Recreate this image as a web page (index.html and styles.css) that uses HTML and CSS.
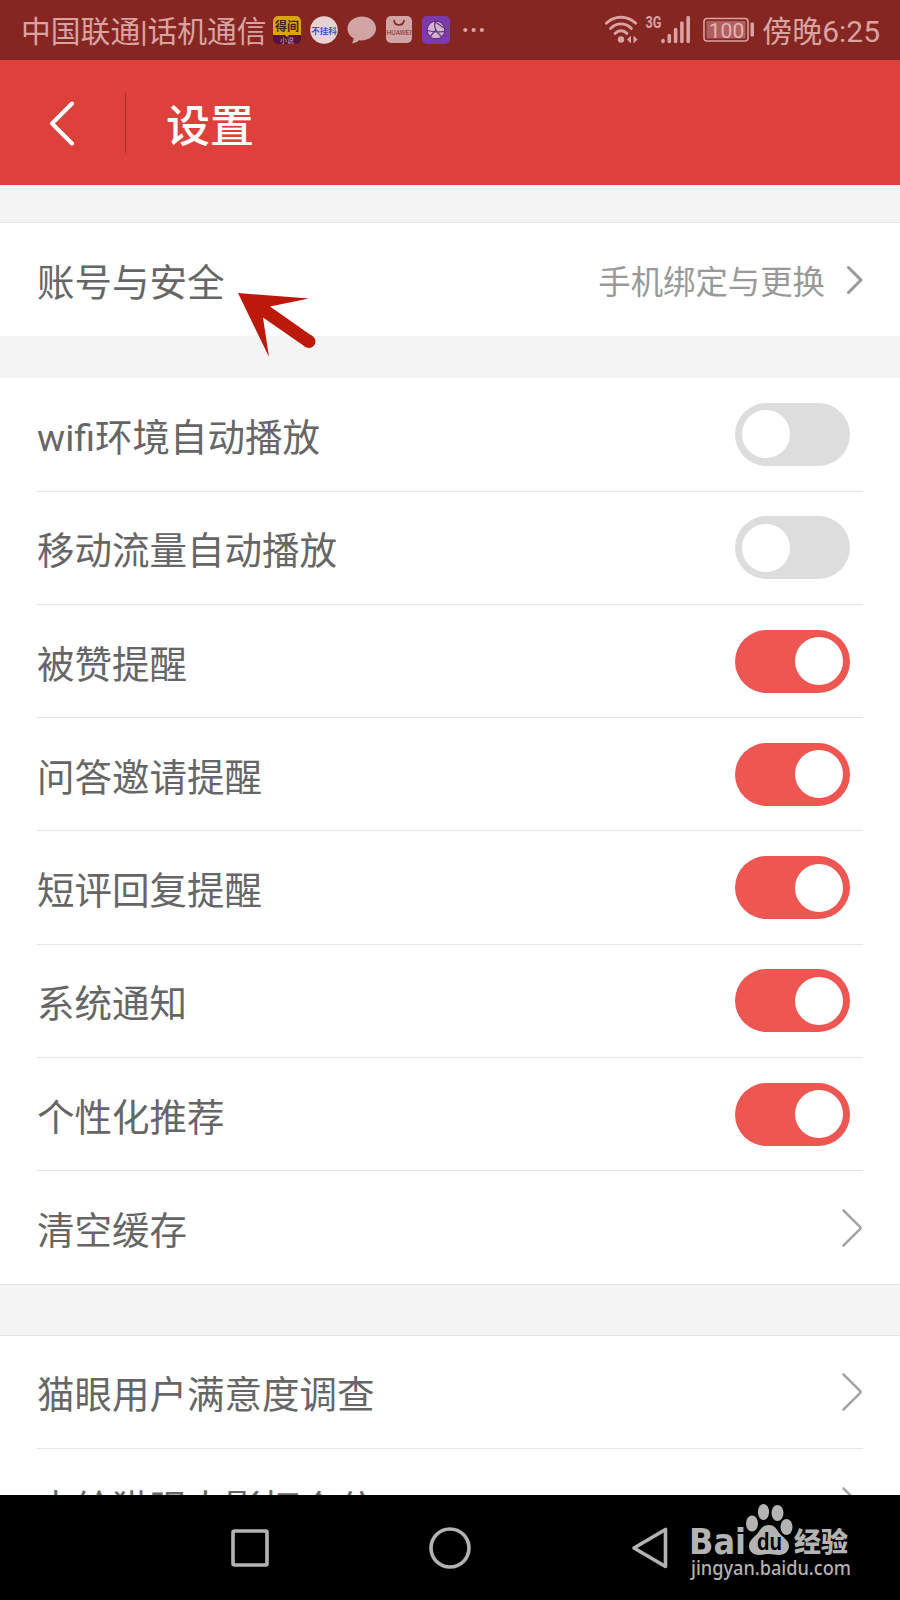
FILE: index.html
```
<!DOCTYPE html>
<html lang="zh-CN">
<head>
	<meta charset="UTF-8">
	<title>设置</title>
	<link rel="stylesheet" href="styles.css">
</head>
<body>
	<div class="phone">
		<!-- status bar -->
		<div class="status">
			<span class="carrier">中国联通|话机通信</span>
			<div class="notice">
				<svg width="28" height="28" viewBox="0 0 28 28">
					<rect width="28" height="28" rx="5" fill="#571040"/>
					<path d="M0 19V5a5 5 0 0 1 5-5h18a5 5 0 0 1 5 5v14H16l-2 2-2-2z" fill="#dda50b"/>
					<text x="14" y="15" class="ico-dejian">得间</text>
					<text x="14" y="26.500" class="ico-sub">小说</text>
				</svg>
				<svg width="28" height="28" viewBox="0 0 28 28">
					<circle cx="14" cy="14" r="13.800" fill="#e6d3d6"/>
					<text x="14" y="17.500" class="ico-bgk">不挂科</text>
				</svg>
				<svg width="29" height="28" viewBox="0 0 29 28">
					<path d="M15 .5C7 .5 .5 5.500 .5 12.500c0 4.500 2.300 7.500 6 9.700 0 2-.5 3.500-1.500 5 3 0 5.500-1.200 7-2.900 9 .8 17-4.300 17-11.800C29 5.500 23 .5 15 .5z" fill="#d0a5a4"/>
				</svg>
				<svg width="28" height="28" viewBox="0 0 28 28">
					<rect x="1" y="0" width="26" height="27" rx="5" fill="#d0a5a4"/>
					<path d="M9 4.500c1 6 9 6 10 0" fill="none" stroke="#862623" stroke-width="1.600" stroke-linecap="round"/>
					<text x="14" y="18.500" class="ico-hw" textLength="25" lengthAdjust="spacingAndGlyphs">HUAWEI</text>
				</svg>
				<svg width="28" height="28" viewBox="0 0 28 28">
					<rect width="28" height="28" rx="5" fill="#7c3bab"/>
					<circle cx="14" cy="14" r="8.800" fill="#d3b4cf" stroke="#55276f" stroke-width="1"/>
					<path d="M13 5.500c-1.500 7 1 10 6.500 15M5.500 14.500c6 2 10 1.500 17 1M13.500 14.500c-2 2.500-4 4-5 6M13 6c4 2 6 4 9 6" fill="none" stroke="#6b3485" stroke-width="1.300"/>
				</svg>
				<svg class="more" width="22" height="28" viewBox="0 0 22 28">
					<g fill="#d9a5a3"><circle cx="2.300" cy="14" r="2.100"/><circle cx="10.600" cy="14" r="2.100"/><circle cx="18.900" cy="14" r="2.100"/></g>
				</svg>
			</div>
			<div class="system">
				<svg width="88" height="32" viewBox="0 0 88 32">
					<g fill="none" stroke="#d9a3a1" stroke-width="2.800" stroke-linecap="round">
						<path d="M2.300 9.300C10 1.200 24 1.200 31.700 9.300"/>
						<path d="M6.500 14.500c6-6.200 15-6.200 21 0"/>
						<path d="M11 19.500c3.500-3.700 8.500-3.700 12 0"/>
					</g>
					<circle cx="17" cy="25.500" r="3.200" fill="#d9a3a1"/>
					<path d="M27 21.500v8l-4-4zM29.500 21.500v8l4-4z" fill="#d9a3a1"/>
					<text x="41.500" y="14" class="ico-3g" textLength="16" lengthAdjust="spacingAndGlyphs">3G</text>
					<g stroke="#d9a3a1" stroke-width="3.600" stroke-linecap="round">
						<path d="M59 26.500v1M65.300 21.500v6M71.600 15.500v12M77.900 9v18.500M84.200 3.500v24"/>
					</g>
				</svg>
				<svg class="battery" width="52" height="26" viewBox="0 0 52 26">
					<rect x="1" y="1.500" width="44" height="22.500" rx="3" fill="none" stroke="#d9a3a1" stroke-width="1.600"/>
					<rect x="3.500" y="4" width="39" height="17.500" fill="#b0605e"/>
					<rect x="47.500" y="5.500" width="3.500" height="14" rx="1" fill="#d9a3a1"/>
					<text x="23.500" y="20.500" class="ico-bat">100</text>
				</svg>
				<span class="time">傍晚6:25</span>
			</div>
		</div>

		<!-- title bar -->
		<div class="header">
			<div class="back">
				<svg width="26" height="46" viewBox="0 0 26 46"><path d="M23 3.500L3 23.500l20 20" fill="none" stroke="#fff" stroke-width="4" stroke-linecap="round" stroke-linejoin="round"/></svg>
			</div>
			<h1>设置</h1>
		</div>

		<div class="main">
			<div class="group account">
				<div class="item">
					<span class="name">账号与安全</span>
					<span class="value">手机绑定与更换</span>
					<svg class="go-small" width="18" height="30" viewBox="0 0 18 30"><path d="M3.500 2.500L16 15 3.500 27.500" fill="none" stroke="#999" stroke-width="3" stroke-linecap="round" stroke-linejoin="round"/></svg>
				</div>
			</div>

			<div class="group switches">
				<div class="item"><span class="name">wifi环境自动播放</span><i class="switch"></i></div>
				<div class="item"><span class="name">移动流量自动播放</span><i class="switch"></i></div>
				<div class="item"><span class="name">被赞提醒</span><i class="switch on"></i></div>
				<div class="item"><span class="name">问答邀请提醒</span><i class="switch on"></i></div>
				<div class="item"><span class="name">短评回复提醒</span><i class="switch on"></i></div>
				<div class="item"><span class="name">系统通知</span><i class="switch on"></i></div>
				<div class="item"><span class="name">个性化推荐</span><i class="switch on"></i></div>
				<div class="item">
					<span class="name">清空缓存</span>
					<svg class="go" width="22" height="40" viewBox="0 0 22 40"><path d="M2.500 2.500L19 18.800q1.200 1.200 0 2.400L2.500 37.500" fill="none" stroke="#a6a6a6" stroke-width="2.600" stroke-linecap="round"/></svg>
				</div>
			</div>

			<div class="group other">
				<div class="item">
					<span class="name">猫眼用户满意度调查</span>
					<svg class="go" width="22" height="40" viewBox="0 0 22 40"><path d="M2.500 2.500L19 18.800q1.200 1.200 0 2.400L2.500 37.500" fill="none" stroke="#a6a6a6" stroke-width="2.600" stroke-linecap="round"/></svg>
				</div>
				<div class="item">
					<span class="name">去给猫眼电影打个分</span>
					<svg class="go" width="22" height="40" viewBox="0 0 22 40"><path d="M2.500 2.500L19 18.800q1.200 1.200 0 2.400L2.500 37.500" fill="none" stroke="#a6a6a6" stroke-width="2.600" stroke-linecap="round"/></svg>
				</div>
			</div>
		</div>

		<!-- nav keys -->
		<div class="nav">
			<svg width="38" height="38" viewBox="0 0 38 38"><rect x="2" y="2" width="34" height="34" rx="1.500" fill="none" stroke="#b3b3b3" stroke-width="3.600"/></svg>
			<svg width="42" height="42" viewBox="0 0 42 42"><circle cx="21" cy="21" r="19" fill="none" stroke="#b3b3b3" stroke-width="3.600"/></svg>
			<svg width="38" height="42" viewBox="0 0 38 42"><path d="M34.500 2.500v37L3 21z" fill="none" stroke="#b3b3b3" stroke-width="3.600" stroke-linejoin="round"/></svg>
		</div>

		<!-- red pointer -->
		<svg class="pointer" width="82" height="66" viewBox="0 0 82 66">
			<path d="M1 0L72 5.500 33 13.500 75.500 43.200 68.500 54 26 24.500 32 64z" fill="#bd190b"/>
			<circle cx="72" cy="48.500" r="6.500" fill="#bd190b"/>
		</svg>

		<!-- watermark -->
		<svg class="logo" width="170" height="90" viewBox="0 0 170 90">
			<g fill="#b3b3b3">
				<text x="1" y="50.500" class="logo-bai" textLength="57" lengthAdjust="spacingAndGlyphs">Bai</text>
				<ellipse cx="64" cy="20.500" rx="6" ry="8"/>
				<ellipse cx="75.500" cy="9" rx="5.600" ry="8"/>
				<ellipse cx="89.500" cy="10" rx="6" ry="8"/>
				<ellipse cx="98.500" cy="24" rx="6" ry="8"/>
				<path d="M81 22c-7 0-9 5-12 9-4 4-8 7-8 12 0 6 5 9 10 9 4 0 6-1 10-1s6 1 10 1c6 0 10-4 10-9s-5-8-9-12c-3-4-5-9-11-9z"/>
				<text x="106" y="49" class="logo-cn" textLength="54" lengthAdjust="spacingAndGlyphs">经验</text>
				<text x="3" y="72" class="logo-url" textLength="160" lengthAdjust="spacingAndGlyphs">jingyan.baidu.com</text>
			</g>
			<text x="69" y="47" class="logo-du" textLength="25" lengthAdjust="spacingAndGlyphs">du</text>
		</svg>
	</div>
</body>
</html>
```
FILE: styles.css
```
	html,
	body {
		padding: 0;
		margin: 0;
		overflow: hidden;
		font-family: Roboto, "Noto Sans CJK SC", sans-serif;
	}

	* {
		box-sizing: border-box;
	}

	svg {
		display: block;
		flex: none;
	}

	.phone {
		position: relative;
		display: flex;
		flex-direction: column;
		width: 900px;
		height: 1600px;
		overflow: hidden;
		background: #f4f4f4;
	}

	/* 状态栏 */
	.status {
		display: flex;
		align-items: center;
		flex: none;
		height: 60px;
		padding: 0 20px 0 21px;
		background: #862623;
		color: #d9a3a1;
		font-size: 30px;
		white-space: nowrap;
	}
	.carrier {
		width: 251px;
		padding-bottom: 2px;
		font-size: 29.800px;
	}
	.notice {
		display: flex;
		align-items: center;
		gap: 9px;
		margin-left: 1px;
	}
	.more {
		margin-left: 4px;
	}
	.system {
		display: flex;
		align-items: center;
		margin-left: auto;
	}
	.battery {
		margin: 0 7px 0 11px;
	}
	.time {
		padding-bottom: 2px;
	}
	.ico-dejian {
		font-size: 12px;
		font-weight: bold;
		text-anchor: middle;
		fill: #3d2515;
	}
	.ico-sub {
		font-size: 7px;
		text-anchor: middle;
		fill: #c9a6bd;
	}
	.ico-bgk {
		font-size: 8.500px;
		font-weight: bold;
		text-anchor: middle;
		fill: #3c5cc4;
	}
	.ico-hw {
		font-size: 7px;
		text-anchor: middle;
		fill: #862623;
	}
	.ico-3g {
		font-size: 16px;
		font-weight: bold;
		fill: #d9a3a1;
	}
	.ico-bat {
		font-size: 21px;
		text-anchor: middle;
		fill: #e2b4b2;
	}

	/* 标题栏 */
	.header {
		display: flex;
		align-items: center;
		flex: none;
		height: 125px;
		background: #de413c;
	}
	.back {
		display: flex;
		align-items: center;
		width: 126px;
		height: 60px;
		padding-left: 49px;
		border-right: 1px solid #ab2d29;
	}
	.header h1 {
		margin: 0 0 0 40px;
		padding-top: 9px;
		font-size: 44px;
		line-height: 60px;
		font-weight: 500;
		color: #fff;
	}

	/* 列表 */
	.main {
		flex: 1;
		min-height: 0;
		overflow: hidden;
	}
	.group {
		padding: 0 37px;
		background: #fff;
	}
	.account {
		margin-top: 37px;
		border-top: 1px solid #e8e8e8;
	}
	.switches {
		margin-top: 42px;
		border-bottom: 1px solid #e2e2e2;
	}
	.other {
		margin-top: 50px;
		border-top: 1px solid #e2e2e2;
	}
	.item {
		display: flex;
		align-items: center;
		height: 113.300px;
		border-bottom: 1px solid #e6e6e6;
		color: #666;
	}
	.account .item,
	.group .item:last-child {
		border-bottom: none;
	}
	.switches .item:last-child {
		height: 112.300px;
	}
	.name {
		flex: 1;
		font-size: 37.500px;
	}
	.value {
		font-size: 32.400px;
		color: #999;
	}
	.go-small {
		margin-left: 20px;
	}

	/* 开关 */
	.switch {
		display: flex;
		align-items: center;
		width: 115px;
		height: 63px;
		margin-right: 13px;
		padding: 0 7px;
		border-radius: 32px;
		background: #ddd;
	}
	.switch::after {
		content: "";
		width: 48px;
		height: 48px;
		border-radius: 50%;
		background: #fff;
	}
	.switch.on {
		justify-content: flex-end;
		background: #ee5652;
	}

	/* 底部按键 */
	.nav {
		display: flex;
		align-items: center;
		flex: none;
		gap: 160px;
		height: 105px;
		padding-left: 231px;
		background: #000;
	}

	/* 浮层 */
	.pointer {
		position: absolute;
		left: 237px;
		top: 293px;
	}
	.logo {
		position: absolute;
		left: 688px;
		top: 1503px;
	}
	.logo-bai {
		font: bold 35px "DejaVu Sans", sans-serif;
	}
	.logo-du {
		font: bold 23px "Liberation Sans", sans-serif;
		fill: #000;
	}
	.logo-cn {
		font: 900 27px "Noto Sans CJK SC", sans-serif;
	}
	.logo-url {
		font: 500 20.500px "Noto Sans", sans-serif;
	}
```
